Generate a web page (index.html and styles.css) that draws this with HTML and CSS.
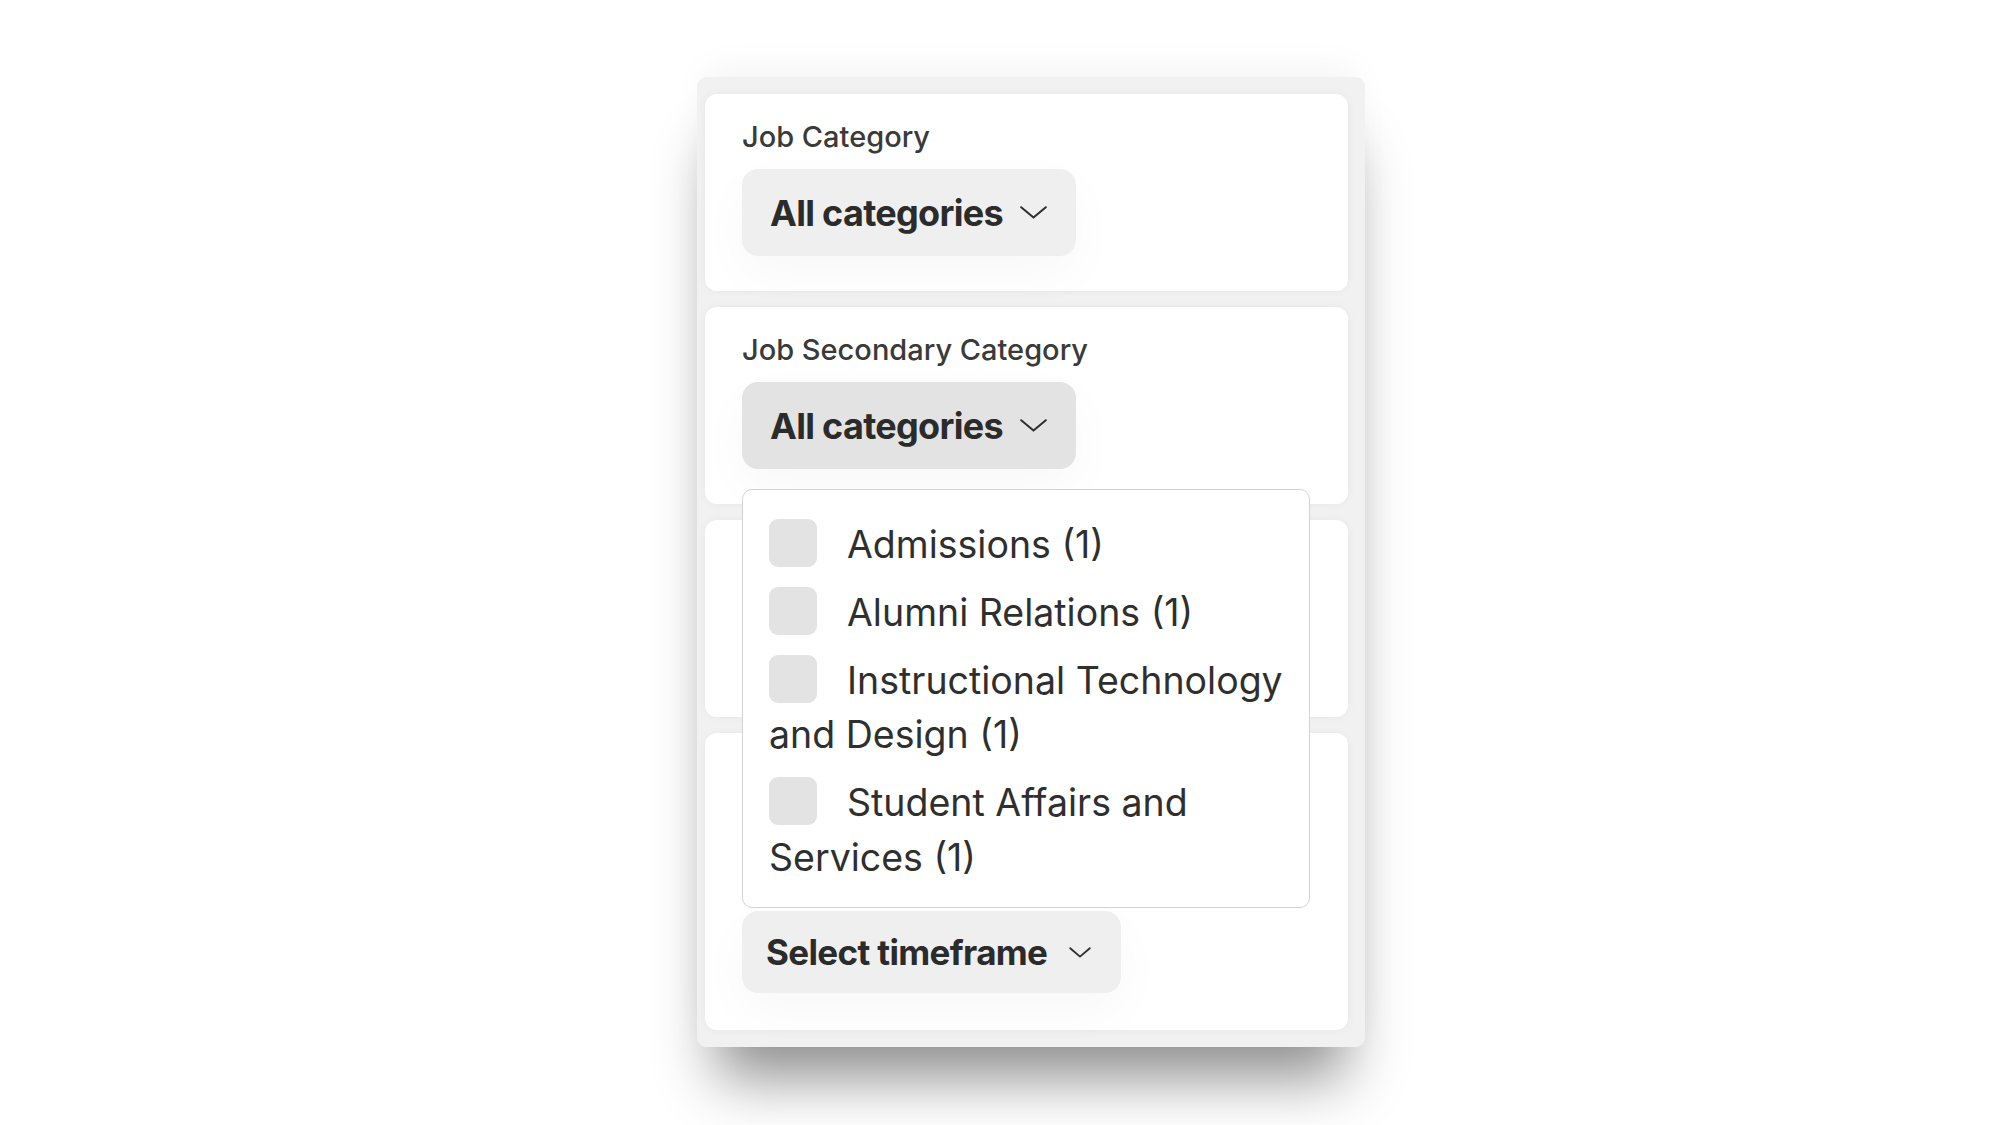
FILE: index.html
```html
<!DOCTYPE html>
<html lang="en">
<head>
<meta charset="utf-8">
<title>Job filters</title>
<link rel="stylesheet" href="styles.css">
</head>
<body>
<div class="panel">
  <section class="card">
    <div class="label">Job Category</div>
    <button class="select" type="button">
      <span>All categories</span>
      <svg class="chev" width="27" height="13" viewBox="0 0 27 13" aria-hidden="true"><path d="M1.2 1.2 L13.5 11.6 L25.8 1.2" fill="none" stroke="#2e2e2e" stroke-width="2" stroke-linecap="round" stroke-linejoin="round"/></svg>
    </button>
  </section>
  <section class="card">
    <div class="label">Job Secondary Category</div>
    <div class="select-wrap">
      <button class="select select-active" type="button">
        <span>All categories</span>
        <svg class="chev" width="27" height="13" viewBox="0 0 27 13" aria-hidden="true"><path d="M1.2 1.2 L13.5 11.6 L25.8 1.2" fill="none" stroke="#2e2e2e" stroke-width="2" stroke-linecap="round" stroke-linejoin="round"/></svg>
      </button>
      <ul class="menu">
        <li><span class="box"></span>Admissions (1)</li>
        <li><span class="box"></span>Alumni Relations (1)</li>
        <li><span class="box"></span>Instructional Technology and Design (1)</li>
        <li><span class="box"></span>Student Affairs and Services (1)</li>
      </ul>
    </div>
  </section>
  <section class="card"></section>
  <section class="card card-last">
    <button class="select select-small" type="button">
      <span>Select timeframe</span>
      <svg class="chev-small" width="22" height="11" viewBox="0 0 22 11" aria-hidden="true"><path d="M1.2 1.2 L11 9.6 L20.8 1.2" fill="none" stroke="#2e2e2e" stroke-width="1.8" stroke-linecap="round" stroke-linejoin="round"/></svg>
    </button>
  </section>
</div>
</body>
</html>
```

FILE: styles.css
```css
html {
  margin: 0;
  padding: 0;
  background: #ffffff;
}

body {
  margin: 0;
  padding: 77px 0 0 0;
  min-height: 1125px;
  box-sizing: border-box;
  font-family: Inter, "Noto Sans", "Liberation Sans", sans-serif;
  color: #2e2e2e;
}

.panel {
  margin-left: 697px;
  width: 668px;
  box-sizing: border-box;
  padding: 17px 17px 17px 8px;
  background: #f1f1f1;
  border-radius: 9px;
  display: flex;
  flex-direction: column;
  gap: 16px;
  box-shadow: 0 50px 56px -20px rgba(0, 0, 0, 0.45), 0 -16px 36px -10px rgba(0, 0, 0, 0.05);
}

.card {
  background: #ffffff;
  border-radius: 12px;
  height: 197px;
  box-sizing: border-box;
  padding: 25px 38px 0 37px;
  box-shadow: 0 0 10px rgba(0, 0, 0, 0.045);
}

.card-last {
  height: auto;
  padding: 178px 38px 37px 37px;
}

.label {
  font-size: 29px;
  line-height: 35px;
  font-weight: 500;
  color: #3a3a3a;
  margin-bottom: 15px;
}

.select {
  display: inline-flex;
  align-items: center;
  gap: 17px;
  height: 87px;
  padding: 0 29px 0 28px;
  border: none;
  border-radius: 16px;
  background: #efefef;
  font-family: inherit;
  font-size: 36px;
  font-weight: 700;
  letter-spacing: -0.7px;
  color: #2b2b2b;
  box-shadow: 0 18px 50px rgba(0, 0, 0, 0.03);
  cursor: pointer;
}

.select-active {
  background: #e3e3e3;
}

.select-small {
  height: 82px;
  padding: 0 30px 0 24px;
  gap: 22px;
  font-size: 35px;
  letter-spacing: -0.65px;
}

.chev {
  display: block;
  width: 27px;
  height: 13px;
  flex: none;
}

.chev-small {
  display: block;
  width: 22px;
  height: 11px;
  flex: none;
}

.select-wrap {
  position: relative;
}

.menu {
  position: absolute;
  top: 107px;
  left: 0;
  z-index: 10;
  width: 568px;
  box-sizing: border-box;
  margin: 0;
  list-style: none;
  padding: 28px 6px 21px 26px;
  background: #ffffff;
  border: 1.5px solid #d3d3d3;
  border-radius: 10px;
  font-size: 37.5px;
  line-height: 54.8px;
  font-weight: 400;
  color: #2f2f2f;
}

.menu li + li {
  margin-top: 13px;
}

.box {
  display: inline-block;
  width: 48px;
  height: 48px;
  border-radius: 9px;
  background: #e3e3e3;
  vertical-align: text-bottom;
  margin-right: 30px;
}
```
